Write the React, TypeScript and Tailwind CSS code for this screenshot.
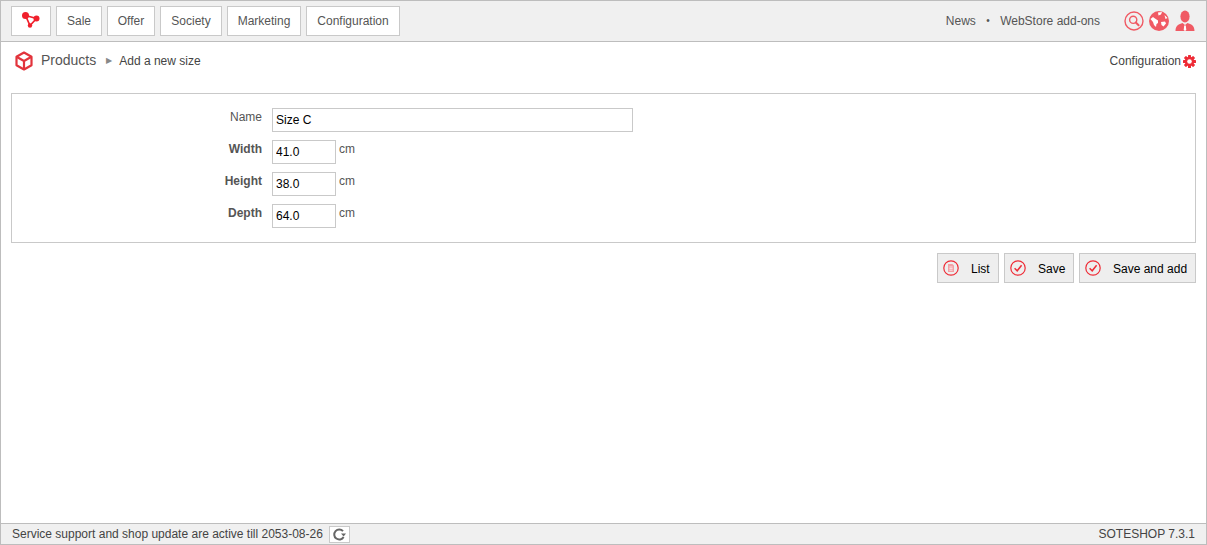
const menu = [
  { label: 'Sale', width: 'w-[46px]' },
  { label: 'Offer', width: 'w-[48px]' },
  { label: 'Society', width: 'w-[62px]' },
  { label: 'Marketing', width: 'w-[74px]' },
  { label: 'Configuration', width: 'w-[94px]' },
]

const sizes = [
  { label: 'Width', value: '41.0' },
  { label: 'Height', value: '38.0' },
  { label: 'Depth', value: '64.0' },
]

function LogoIcon() {
  return (
    <svg width="30" height="20" viewBox="0 0 30 20" fill="none">
      <path d="M9.5 4.5 L20.5 7.5 L14 14.5 Z" stroke="#f0202c" strokeWidth="1.7" />
      <circle cx="9.5" cy="4.5" r="3.5" fill="#f0202c" />
      <circle cx="20.5" cy="7.5" r="3" fill="#f0202c" />
      <circle cx="14" cy="14.5" r="2.2" fill="#f0202c" />
    </svg>
  )
}

function BoxIcon() {
  return (
    <svg width="18" height="20" viewBox="0 0 18 20" fill="none" stroke="#e2343c" strokeWidth="2.2" strokeLinejoin="round">
      <path d="M9 1.5 L16.5 5.8 V14.2 L9 18.5 L1.5 14.2 V5.8 Z" />
      <path d="M1.5 5.8 L9 10 L16.5 5.8 M9 10 V18.5" />
    </svg>
  )
}

function SearchIcon() {
  return (
    <svg width="20" height="20" viewBox="0 0 20 20" fill="none" stroke="#f05a64" strokeWidth="1.4">
      <circle cx="10" cy="10" r="9" />
      <circle cx="9.2" cy="8.8" r="3.6" />
      <path d="M11.8 11.5 L14.6 14.2" strokeWidth="2" strokeLinecap="round" />
    </svg>
  )
}

function GlobeIcon() {
  return (
    <svg width="20" height="20" viewBox="0 0 20 20">
      <circle cx="10" cy="10" r="10" fill="#f05a64" />
      <path d="M1.5 8 L4 6 L6 7.5 L9 9.5 L9 12 L7.5 13 L7 16 L5 14 L4 11 Z M9 1.5 L13 1 L12 3.5 L9.5 4.5 Z M12 11 L16 10.5 L17 12.5 L14.5 15.5 L12.5 14 Z M15.5 4 L18.5 7 L16.5 8 Z" fill="#fff" />
    </svg>
  )
}

function UserIcon() {
  return (
    <svg width="20" height="22" viewBox="0 0 20 22" fill="#f05a64">
      <ellipse cx="10" cy="6.5" rx="4.6" ry="6" />
      <path d="M0.5 21 C0.5 15.5 4 14 7.5 13 L10 15 L12.5 13 C16 14 19.5 15.5 19.5 21 Z" />
      <path d="M9.2 15.5 H10.8 L11.3 20 L10 21 L8.7 20 Z" fill="#fff" />
    </svg>
  )
}

function GearIcon() {
  return (
    <svg width="13" height="13" viewBox="0 0 13 13">
      <g fill="#ee2b36">
        <rect x="5" y="0" width="3" height="13" rx="0.6" />
        <rect x="5" y="0" width="3" height="13" rx="0.6" transform="rotate(45 6.5 6.5)" />
        <rect x="5" y="0" width="3" height="13" rx="0.6" transform="rotate(90 6.5 6.5)" />
        <rect x="5" y="0" width="3" height="13" rx="0.6" transform="rotate(135 6.5 6.5)" />
        <circle cx="6.5" cy="6.5" r="4.7" />
      </g>
      <circle cx="6.5" cy="6.5" r="2.3" fill="#fff" />
    </svg>
  )
}

function CheckIcon() {
  return (
    <svg width="16" height="16" viewBox="0 0 16 16" fill="none" stroke="#ee2b36" strokeWidth="1.2">
      <circle cx="8" cy="8" r="7.2" />
      <path d="M4.6 8.2 L7.2 10.8 L11.6 5.2" strokeWidth="1.5" />
    </svg>
  )
}

function ListIcon() {
  return (
    <svg width="16" height="16" viewBox="0 0 16 16" fill="none">
      <circle cx="8" cy="8" r="7.2" stroke="#ee2b36" strokeWidth="1.2" />
      <path d="M5 4 H9.4 L11 5.6 V12 H5 Z" fill="#f3a0a5" />
      <path d="M6.4 7 H9.6 M6.4 8.6 H9.6 M6.4 10.2 H9.6" stroke="#fff" strokeWidth="0.7" />
    </svg>
  )
}

function RefreshIcon() {
  return (
    <svg width="13" height="13" viewBox="0 0 13 13" fill="none">
      <path d="M10.6 9 A5 5 0 1 1 10 3.2" stroke="#666666" strokeWidth="2" />
      <path d="M8 5.4 H13 L10.6 8.6 Z" fill="#666666" />
    </svg>
  )
}

function ActionButton({ label, icon, width }: { label: string; icon: React.ReactNode; width: string }) {
  return (
    <button className={`h-[30px] ${width} flex items-center gap-[12px] pl-[5px] bg-[#eeeeee] border border-[#c9c9c9] text-xs text-black`}>
      {icon}
      <span className="pt-[1px]">{label}</span>
    </button>
  )
}

export default function App() {
  return (
    <div className="h-[545px] flex flex-col bg-white border-x border-[#bdbdbd] font-['Liberation_Sans',Arial,sans-serif] text-xs text-[#555555] overflow-hidden">
      <header className="h-[42px] shrink-0 flex items-center justify-between pl-[10px] pr-[11px] bg-[#f0f0f0] border-y border-[#bdbdbd]">
        <nav className="flex items-center gap-[5px]">
          <div className="w-[40px] h-[30px] flex items-center justify-center bg-white border border-[#c9c9c9]">
            <LogoIcon />
          </div>
          {menu.map((item) => (
            <a key={item.label} className={`${item.width} h-[30px] flex items-center justify-center bg-white border border-[#c9c9c9]`}>
              {item.label}
            </a>
          ))}
        </nav>
        <div className="flex items-center">
          <a>News</a>
          <span className="mx-[10.4px] text-[10px]">•</span>
          <a>WebStore add-ons</a>
          <div className="ml-[24px] flex items-center">
            <SearchIcon />
            <span className="ml-[5px] flex"><GlobeIcon /></span>
            <span className="ml-[6px] flex"><UserIcon /></span>
          </div>
        </div>
      </header>

      <div className="h-[38px] shrink-0 flex items-center justify-between pl-[14px] pr-[10px]">
        <div className="flex items-center">
          <BoxIcon />
          <span className="ml-[8px] pb-[2px] text-sm">Products</span>
          <span className="ml-[10px] w-[9px] text-[8px] text-[#888888]">▶</span>
          <span className="ml-[4px] text-[#444444]">Add a new size</span>
        </div>
        <div className="flex items-center gap-[2px] text-[#444444]">
          <span>Configuration</span>
          <GearIcon />
        </div>
      </div>

      <main className="flex-1 px-[10px] pt-[13px]">
        <form className="h-[150px] pt-[14px] border border-[#c9c9c9] flex flex-col gap-[8px]">
          <div className="flex h-[24px]">
            <label className="w-[260px] pr-[10px] text-right pt-[1px]">Name</label>
            <input readOnly value="Size C" className="w-[361px] h-[24px] px-[3px] border border-[#c9c9c9] bg-white text-xs text-black outline-none" />
          </div>
          {sizes.map((size) => (
            <div key={size.label} className="flex h-[24px]">
              <label className="w-[260px] pr-[10px] text-right font-bold pt-[1px]">{size.label}</label>
              <input readOnly value={size.value} className="w-[64px] h-[24px] px-[3px] border border-[#c9c9c9] bg-white text-xs text-black outline-none" />
              <span className="ml-[3px] pt-[1px]">cm</span>
            </div>
          ))}
        </form>
        <div className="mt-[10px] flex justify-end gap-[5px]">
          <ActionButton label="List" icon={<ListIcon />} width="w-[62px]" />
          <ActionButton label="Save" icon={<CheckIcon />} width="w-[70px]" />
          <ActionButton label="Save and add" icon={<CheckIcon />} width="w-[117px]" />
        </div>
      </main>

      <footer className="h-[22px] shrink-0 flex items-center justify-between pl-[11px] pr-[11px] bg-[#f0f0f0] border-y border-[#bdbdbd] text-[#444444]">
        <div className="flex items-center gap-[6px]">
          <span>Service support and shop update are active till 2053-08-26</span>
          <span className="w-[21px] h-[17px] flex items-center justify-center bg-white border border-[#c9c9c9]">
            <RefreshIcon />
          </span>
        </div>
        <span>SOTESHOP 7.3.1</span>
      </footer>
    </div>
  )
}
